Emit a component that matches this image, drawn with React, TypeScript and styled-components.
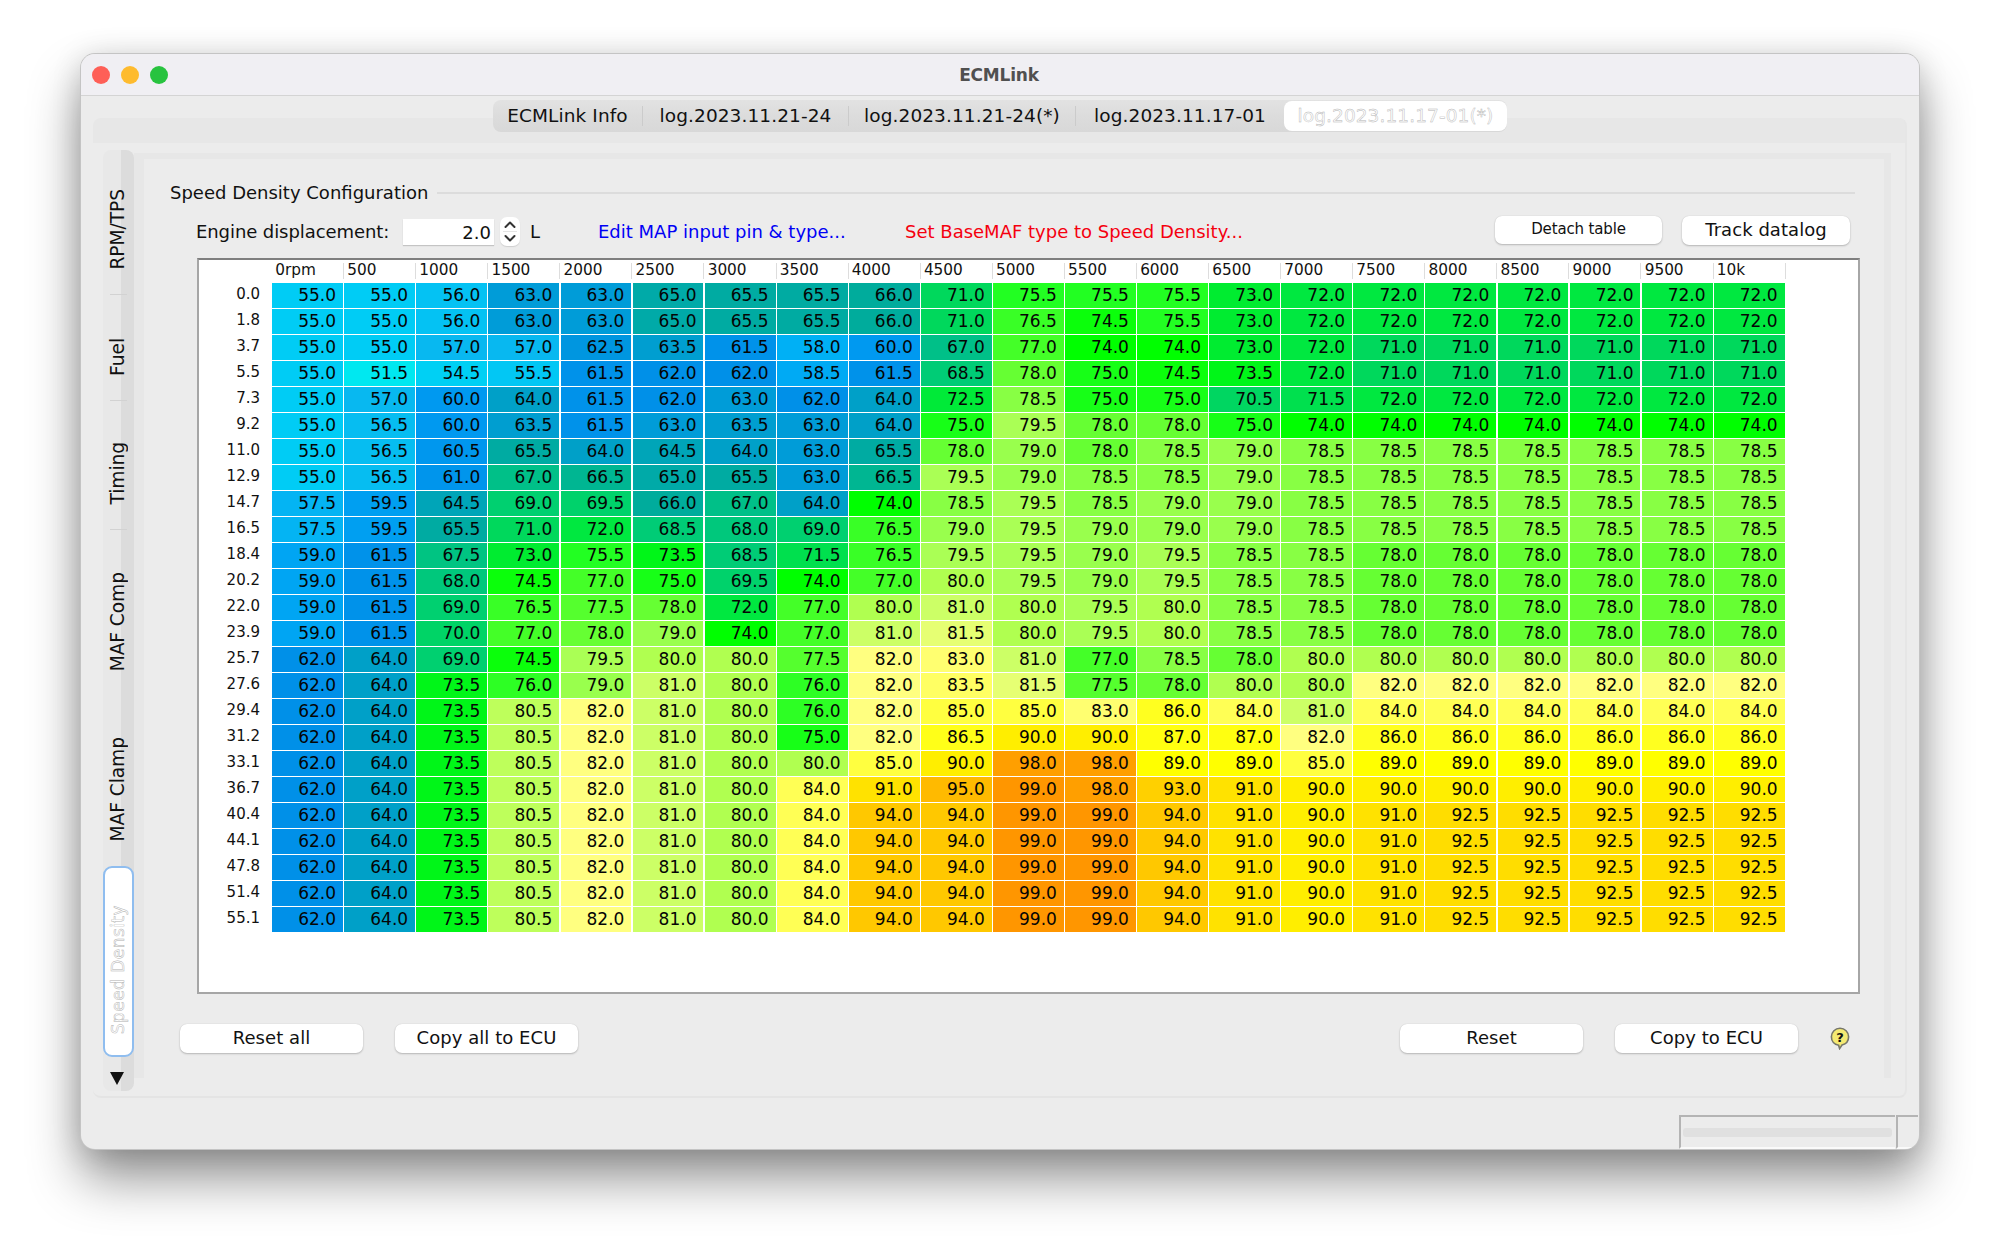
import React from "react";
import styled, { createGlobalStyle } from "styled-components";

const Global = createGlobalStyle`
  html, body { margin: 0; padding: 0; background: #fff; }
  body { font-family: "DejaVu Sans", "Liberation Sans", sans-serif; color: #111; }
  * { box-sizing: border-box; }
`;

const Stage = styled.div`
  width: 2000px;
  height: 1256px;
  padding: 54px 81px 107px;
  overflow: hidden;
`;

const Window = styled.div`
  width: 1838px;
  height: 1095px;
  display: flex;
  flex-direction: column;
  background: #ececec;
  border-radius: 14px;
  box-shadow: 0 0 0 1px #c4c4c4, 0 30px 52px rgba(0, 0, 0, 0.42), 0 4px 30px rgba(0, 0, 0, 0.16);
  overflow: hidden;
`;

const TitleBar = styled.div`
  height: 42px;
  flex: none;
  display: flex;
  align-items: center;
  background: #f0eff3;
  border-bottom: 1px solid #d4d4d4;
  padding-left: 11px;
  position: relative;
`;

const Light = styled.span<{ $c: string }>`
  width: 18px;
  height: 18px;
  border-radius: 50%;
  background: ${(p) => p.$c};
  margin-right: 11px;
`;

const TitleText = styled.div`
  position: absolute;
  left: -2px;
  right: 0;
  text-align: center;
  font-weight: 700;
  font-size: 17px;
  color: #505050;
  letter-spacing: -0.2px;
`;

const Body = styled.div`
  flex: 1;
  min-height: 0;
  display: flex;
  flex-direction: column;
  padding: 4px 12px 0;
`;

const TabStrip = styled.div`
  align-self: center;
  display: flex;
  align-items: center;
  height: 32px;
  margin-bottom: -14px;
  border-radius: 8px;
  background: linear-gradient(#e2e2e2, #dcdcdc 50%, #d8d8d8);
  position: relative;
  z-index: 1;
`;

const Tab = styled.div<{ $w: number; $last?: boolean }>`
  width: ${(p) => p.$w}px;
  text-align: center;
  font-size: 18.5px;
  letter-spacing: 0.1px;
  line-height: 20px;
  white-space: nowrap;
  border-right: ${(p) => (p.$last ? "none" : "1px solid #cbcbcb")};
`;

const ActiveTab = styled.div`
  width: 223px;
  height: 30px;
  background: #fff;
  border-radius: 8px;
  text-align: center;
  font-size: 18.5px;
  letter-spacing: 0.1px;
  line-height: 30px;
  color: #fff;
  white-space: nowrap;
  -webkit-text-stroke: 0.45px #b4b4b4;
`;

const OuterPane = styled.div`
  height: 980px;
  flex: none;
  display: flex;
  padding: 32px 14px 5px 10px;
  border-radius: 8px;
  border-bottom: 2px solid #e4e4e4;
  border-right: 2px solid #e6e6e6;
  background: linear-gradient(#e7e7e7 0 25px, #ececec 25px);
`;

const VTabs = styled.div`
  width: 31px;
  flex: none;
  display: flex;
  flex-direction: column;
  border-radius: 8px;
  background: linear-gradient(90deg, #e8e8e8 0 18px, #dcdcdc 18px);
  position: relative;
  z-index: 1;
`;

const VTab = styled.div<{ $h: number; $sep?: boolean }>`
  height: ${(p) => p.$h}px;
  flex: none;
  display: flex;
  flex-direction: column;
  justify-content: flex-end;
  align-items: flex-start;
  padding: 0 0 25px 4px;
  position: relative;
  &::after {
    content: "";
    display: ${(p) => (p.$sep ? "block" : "none")};
    position: absolute;
    left: 7px;
    right: 7px;
    bottom: 0;
    height: 1px;
    background: #d2d2d2;
  }
`;

const VLabel = styled.span`
  writing-mode: vertical-rl;
  transform: rotate(180deg);
  font-size: 18.7px;
  line-height: 22px;
  letter-spacing: -0.1px;
  white-space: nowrap;
  color: #111;
`;

const VActive = styled.div`
  height: 191px;
  flex: none;
  background: #fff;
  border: 2px solid #8fbdef;
  border-radius: 9px;
  display: flex;
  flex-direction: column;
  justify-content: flex-end;
  align-items: flex-start;
  padding: 0 0 21px 2px;
`;

const VActiveLabel = styled(VLabel)`
  color: #fff;
  font-size: 17px;
  letter-spacing: 0.45px;
  -webkit-text-stroke: 0.45px #b0b0b0;
`;

const ArrowDown = styled.div`
  flex: 1;
  display: flex;
  justify-content: center;
  align-items: flex-start;
  padding: 15px 3px 0 0;
`;

const InnerPane = styled.div`
  flex: 1;
  margin: 3px 0 13px;
  display: flex;
  flex-direction: column;
  background: #ececec;
  border-top: 6px solid #e7e7e7;
  border-left: 10px solid #e7e7e7;
  border-right: 7px solid #e7e7e7;
`;

const GroupHead = styled.div`
  height: 22px;
  margin: 22px 29px 0 26px;
  display: flex;
  align-items: center;
`;

const GroupTitle = styled.div`
  font-size: 18px;
  white-space: nowrap;
`;

const GroupLine = styled.div`
  flex: 1;
  height: 2px;
  margin: 2px 0 0 9px;
  background: #dcdcdc;
`;

const ControlRow = styled.div`
  height: 29px;
  margin: 14px 34px 0 52px;
  display: flex;
  align-items: center;
`;

const Label = styled.div`
  font-size: 18px;
  letter-spacing: -0.08px;
  white-space: nowrap;
  width: 207px;
`;

const SpinInput = styled.div`
  width: 91px;
  height: 26px;
  background: #fff;
  box-shadow: 0 1px 1px #c4c4c4;
  text-align: right;
  padding-right: 3px;
  font-size: 18px;
  line-height: 27px;
`;

const Stepper = styled.div`
  width: 20px;
  height: 29px;
  margin-left: 6px;
  background: #fff;
  border-radius: 7px;
  box-shadow: 0 1px 1px #cfcfcf;
  display: flex;
  align-items: center;
  justify-content: center;
`;

const Unit = styled.div`
  font-size: 18px;
  margin-left: 10px;
  width: 68px;
`;

const LinkText = styled.div<{ $c: string; $w: number }>`
  color: ${(p) => p.$c};
  font-size: 18px;
  letter-spacing: 0px;
  white-space: nowrap;
  width: ${(p) => p.$w}px;
`;

const RightGroup = styled.div`
  margin-left: auto;
  display: flex;
  gap: 20px;
  margin-top: -2px;
`;

const Btn = styled.div<{ $w: number; $small?: boolean }>`
  width: ${(p) => p.$w}px;
  height: ${(p) => (p.$small ? 28 : 29)}px;
  flex: none;
  display: flex;
  align-items: center;
  justify-content: center;
  padding-bottom: 2px;
  background: #fff;
  border-radius: 7px;
  box-shadow: 0 1px 2px rgba(0, 0, 0, 0.22), 0 0 1px rgba(0, 0, 0, 0.16);
  font-size: ${(p) => (p.$small ? 15 : 18)}px;
  letter-spacing: ${(p) => (p.$small ? "-0.15px" : "0.05px")};
  white-space: nowrap;
`;

const TableFrame = styled.div`
  width: 1663px;
  height: 736px;
  margin: 12px 0 0 53px;
  background: #fff;
  border: 2px solid #a6a6a6;
  border-top-color: #7f7f7f;
  flex: none;
`;

const Grid = styled.div`
  display: grid;
  grid-template-columns: 72px repeat(21, 70.9px);
  grid-template-rows: 22px repeat(25, 24.8px);
  column-gap: 1.2px;
  row-gap: 1.2px;
`;

const Corner = styled.div``;

const HeadCell = styled.div`
  height: 16px;
  margin-top: 3px;
  padding-left: 3px;
  font-size: 15.3px;
  line-height: 14px;
  border-right: 1px solid #dddddd;
  margin-right: -1px;
`;

const RowLabel = styled.div`
  text-align: right;
  padding-right: 11px;
  font-size: 15px;
  line-height: 22px;
`;

const Cell = styled.div`
  text-align: right;
  padding-right: 7px;
  font-size: 17px;
  line-height: 25px;
  color: #050505;
`;

const Footer = styled.div`
  height: 30px;
  margin: 29px 34px 0 36px;
  display: flex;
  align-items: center;
  gap: 32px;
`;

const Spacer = styled.div`
  flex: 1;
`;

const StatusBar = styled.div`
  flex: 1;
  display: flex;
  align-items: flex-end;
  justify-content: flex-end;
  margin: 0 -11px 0 0;
`;

const Grip = styled.div<{ $w: number }>`
  width: ${(p) => p.$w}px;
  height: 34px;
  margin-left: 1px;
  border-top: 2px solid #b4b4b4;
  border-left: 2px solid #b4b4b4;
  border-bottom: 2px solid #fafafa;
  padding: 11px 3px 0 2px;
`;

const GripBar = styled.div`
  height: 9px;
  border-radius: 3px;
  background: #e0e0e0;
`;

const heads = ["0rpm","500","1000","1500","2000","2500","3000","3500","4000","4500","5000","5500","6000","6500","7000","7500","8000","8500","9000","9500","10k"];

const r785 = Array(6).fill(78.5);
const r78 = Array(6).fill(78);
const high = [62,64,73.5,80.5,82,81,80,84,94,94,99,99,94,91,90,91,92.5,92.5,92.5,92.5,92.5];

const rows: [string, number[]][] = [
  ["0.0",[55,55,56,63,63,65,65.5,65.5,66,71,75.5,75.5,75.5,73,72,72,72,72,72,72,72]],
  ["1.8",[55,55,56,63,63,65,65.5,65.5,66,71,76.5,74.5,75.5,73,72,72,72,72,72,72,72]],
  ["3.7",[55,55,57,57,62.5,63.5,61.5,58,60,67,77,74,74,73,72,71,71,71,71,71,71]],
  ["5.5",[55,51.5,54.5,55.5,61.5,62,62,58.5,61.5,68.5,78,75,74.5,73.5,72,71,71,71,71,71,71]],
  ["7.3",[55,57,60,64,61.5,62,63,62,64,72.5,78.5,75,75,70.5,71.5,72,72,72,72,72,72]],
  ["9.2",[55,56.5,60,63.5,61.5,63,63.5,63,64,75,79.5,78,78,75,74,74,74,74,74,74,74]],
  ["11.0",[55,56.5,60.5,65.5,64,64.5,64,63,65.5,78,79,78,78.5,79,78.5,...r785]],
  ["12.9",[55,56.5,61,67,66.5,65,65.5,63,66.5,79.5,79,78.5,78.5,79,78.5,...r785]],
  ["14.7",[57.5,59.5,64.5,69,69.5,66,67,64,74,78.5,79.5,78.5,79,79,78.5,...r785]],
  ["16.5",[57.5,59.5,65.5,71,72,68.5,68,69,76.5,79,79.5,79,79,79,78.5,...r785]],
  ["18.4",[59,61.5,67.5,73,75.5,73.5,68.5,71.5,76.5,79.5,79.5,79,79.5,78.5,78.5,...r78]],
  ["20.2",[59,61.5,68,74.5,77,75,69.5,74,77,80,79.5,79,79.5,78.5,78.5,...r78]],
  ["22.0",[59,61.5,69,76.5,77.5,78,72,77,80,81,80,79.5,80,78.5,78.5,...r78]],
  ["23.9",[59,61.5,70,77,78,79,74,77,81,81.5,80,79.5,80,78.5,78.5,...r78]],
  ["25.7",[62,64,69,74.5,79.5,80,80,77.5,82,83,81,77,78.5,78,80,80,80,80,80,80,80]],
  ["27.6",[62,64,73.5,76,79,81,80,76,82,83.5,81.5,77.5,78,80,80,82,82,82,82,82,82]],
  ["29.4",[62,64,73.5,80.5,82,81,80,76,82,85,85,83,86,84,81,84,84,84,84,84,84]],
  ["31.2",[62,64,73.5,80.5,82,81,80,75,82,86.5,90,90,87,87,82,86,86,86,86,86,86]],
  ["33.1",[62,64,73.5,80.5,82,81,80,80,85,90,98,98,89,89,85,89,89,89,89,89,89]],
  ["36.7",[62,64,73.5,80.5,82,81,80,84,91,95,99,98,93,91,90,90,90,90,90,90,90]],
  ["40.4",high],
  ["44.1",high],
  ["47.8",high],
  ["51.4",high],
  ["55.1",high],
];

const anchors: [number, number[]][] = [
  [51.5,[0,232,240]],
  [55,[0,204,245]],
  [57,[8,184,240]],
  [58,[0,176,245]],
  [60,[0,153,240]],
  [62,[0,144,232]],
  [63,[0,156,216]],
  [64,[0,160,200]],
  [65,[0,170,168]],
  [66,[0,172,156]],
  [67,[0,192,136]],
  [69,[0,208,112]],
  [71,[0,216,92]],
  [72,[0,232,64]],
  [73,[0,236,48]],
  [74,[0,255,0]],
  [75.5,[34,255,34]],
  [77,[68,255,40]],
  [78,[102,255,51]],
  [78.5,[136,255,68]],
  [79.5,[170,255,85]],
  [80,[176,255,80]],
  [81,[204,255,102]],
  [82,[255,255,128]],
  [83,[255,255,112]],
  [84,[255,255,85]],
  [85,[255,255,64]],
  [86,[255,255,32]],
  [87,[255,255,16]],
  [89,[255,255,0]],
  [90,[255,238,0]],
  [91,[255,226,0]],
  [92.5,[255,221,0]],
  [93,[255,208,0]],
  [94,[255,200,0]],
  [95,[255,186,0]],
  [98,[255,159,0]],
  [99,[255,150,0]],
];

function heat(v: number): string {
  for (let i = 1; i < anchors.length; i++) {
    const [a, ca] = anchors[i - 1];
    const [b, cb] = anchors[i];
    if (v <= b) {
      const t = (v - a) / (b - a);
      const c = ca.map((x, k) => Math.round(x + (cb[k] - x) * t));
      return `rgb(${c[0]},${c[1]},${c[2]})`;
    }
  }
  return "rgb(255,150,0)";
}

const Chevrons = () => (
  <svg width="14" height="25" viewBox="0 0 14 25" fill="none">
    <path d="M2.5 8 L7 3.5 L11.5 8" stroke="#333" strokeWidth="2" strokeLinecap="round" strokeLinejoin="round" />
    <path d="M0 12.5 H14" stroke="#e4e4e4" strokeWidth="1" />
    <path d="M2.5 17 L7 21.5 L11.5 17" stroke="#333" strokeWidth="2" strokeLinecap="round" strokeLinejoin="round" />
  </svg>
);

const HelpIcon = () => (
  <svg width="20" height="23" viewBox="0 0 20 23">
    <path
      d="M10 1.2 C14.8 1.2 18.6 5 18.6 9.8 C18.6 14.2 15.6 17.2 12 18 L9.6 21.6 L8.6 18.2 C4.4 17.6 1.4 14.2 1.4 9.8 C1.4 5 5.2 1.2 10 1.2 Z"
      fill="#f5ea72"
      stroke="#77776a"
      strokeWidth="1.6"
    />
    <text x="10" y="15" textAnchor="middle" fontSize="13" fontWeight="700" fontFamily="DejaVu Sans" fill="#111">?</text>
  </svg>
);

const vtabs: [string, number][] = [
  ["RPM/TPS", 145],
  ["Fuel", 106],
  ["Timing", 129],
  ["MAF Comp", 166],
  ["MAF Clamp", 170],
];

export default function App() {
  return (
    <Stage>
      <Global />
      <Window>
        <TitleBar>
          <Light $c="#fe5f57" />
          <Light $c="#febb2e" />
          <Light $c="#28c33f" />
          <TitleText>ECMLink</TitleText>
        </TitleBar>
        <Body>
          <TabStrip>
            <Tab $w={150}>ECMLink Info</Tab>
            <Tab $w={206}>log.2023.11.21-24</Tab>
            <Tab $w={227}>log.2023.11.21-24(*)</Tab>
            <Tab $w={208} $last>log.2023.11.17-01</Tab>
            <ActiveTab>log.2023.11.17-01(*)</ActiveTab>
          </TabStrip>
          <OuterPane>
            <VTabs>
              {vtabs.map(([t, h], i) => (
                <VTab key={t} $h={h} $sep={i < 3}>
                  <VLabel>{t}</VLabel>
                </VTab>
              ))}
              <VActive>
                <VActiveLabel>Speed Density</VActiveLabel>
              </VActive>
              <ArrowDown>
                <svg width="14" height="13" viewBox="0 0 14 13">
                  <path d="M0 0 H14 L7 13 Z" fill="#111" />
                </svg>
              </ArrowDown>
            </VTabs>
            <InnerPane>
              <GroupHead>
                <GroupTitle>Speed Density Configuration</GroupTitle>
                <GroupLine />
              </GroupHead>
              <ControlRow>
                <Label>Engine displacement:</Label>
                <SpinInput>2.0</SpinInput>
                <Stepper>
                  <Chevrons />
                </Stepper>
                <Unit>L</Unit>
                <LinkText $c="#0000f5" $w={307}>Edit MAP input pin &amp; type...</LinkText>
                <LinkText $c="#f5000f" $w={334}>Set BaseMAF type to Speed Density...</LinkText>
                <RightGroup>
                  <Btn $w={167} $small>Detach table</Btn>
                  <Btn $w={168}>Track datalog</Btn>
                </RightGroup>
              </ControlRow>
              <TableFrame>
                <Grid>
                  <Corner />
                  {heads.map((h) => (
                    <HeadCell key={h}>{h}</HeadCell>
                  ))}
                  {rows.map(([label, vals]) => (
                    <React.Fragment key={label}>
                      <RowLabel>{label}</RowLabel>
                      {vals.map((v, i) => (
                        <Cell key={i} style={{ background: heat(v) }}>
                          {v.toFixed(1)}
                        </Cell>
                      ))}
                    </React.Fragment>
                  ))}
                </Grid>
              </TableFrame>
              <Footer>
                <Btn $w={183}>Reset all</Btn>
                <Btn $w={183}>Copy all to ECU</Btn>
                <Spacer />
                <Btn $w={183}>Reset</Btn>
                <Btn $w={183}>Copy to ECU</Btn>
                <HelpIcon />
              </Footer>
            </InnerPane>
          </OuterPane>
          <StatusBar>
            <Grip $w={216}>
              <GripBar />
            </Grip>
            <Grip $w={22} />
          </StatusBar>
        </Body>
      </Window>
    </Stage>
  );
}
